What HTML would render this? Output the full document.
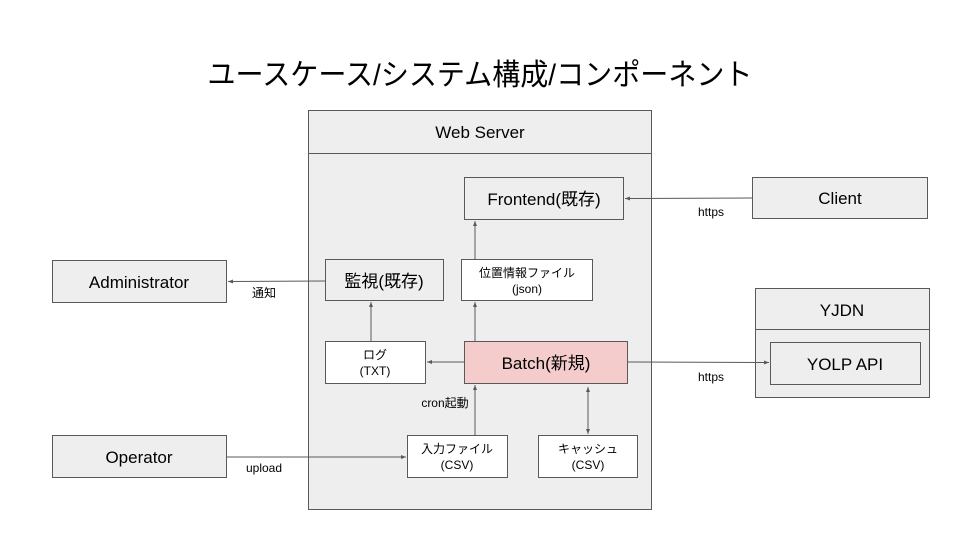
<!DOCTYPE html>
<html><head><meta charset="utf-8"><style>
html,body{margin:0;padding:0;background:#fff;}
svg{display:block;font-family:"Liberation Sans","Noto Sans CJK JP",sans-serif;}
</style></head><body>
<svg width="960" height="540" viewBox="0 0 960 540" xmlns="http://www.w3.org/2000/svg">
<defs><marker id="a" viewBox="0 0 10 10" refX="10" refY="5" markerWidth="5" markerHeight="5" orient="auto-start-reverse"><path d="M0 1 L10 5 L0 9 z" fill="#595959"/></marker></defs>
<text x="480" y="85" font-size="30" text-anchor="middle" textLength="545" lengthAdjust="spacingAndGlyphs" fill="#000">ユースケース/システム構成/コンポーネント</text>
<g stroke="#595959" stroke-width="1" fill="#eeeeee">
<rect x="308.5" y="110.5" width="343" height="399"/>
<line x1="308" y1="153.5" x2="651" y2="153.5"/>
<rect x="464.5" y="177.5" width="159" height="42"/>
<rect x="325.5" y="259.5" width="118" height="41"/>
<rect x="461.5" y="259.5" width="131" height="41" fill="#fff"/>
<rect x="325.5" y="341.5" width="100" height="42" fill="#fff"/>
<rect x="464.5" y="341.5" width="163" height="42" fill="#f4cccc"/>
<rect x="407.5" y="435.5" width="100" height="42" fill="#fff"/>
<rect x="538.5" y="435.5" width="99" height="42" fill="#fff"/>
<rect x="52.5" y="260.5" width="174" height="42"/>
<rect x="52.5" y="435.5" width="174" height="42"/>
<rect x="752.5" y="177.5" width="175" height="41"/>
<rect x="755.5" y="288.5" width="174" height="109"/>
<line x1="755" y1="329.5" x2="929" y2="329.5"/>
<rect x="770.5" y="342.5" width="150" height="42"/>
</g>
<g stroke="#595959" stroke-width="1" fill="none" marker-end="url(#a)">
<line x1="752" y1="198" x2="625" y2="198.5"/>
<line x1="475" y1="259" x2="475" y2="221"/>
<line x1="325" y1="281" x2="228" y2="281.5"/>
<line x1="371" y1="341" x2="371" y2="302"/>
<line x1="475" y1="341" x2="475" y2="302"/>
<line x1="464" y1="362" x2="427" y2="362"/>
<line x1="627" y1="362" x2="769" y2="362.5"/>
<line x1="475" y1="435" x2="475" y2="385"/>
<line x1="226" y1="457" x2="406" y2="457"/>
<line x1="588" y1="387" x2="588" y2="434" marker-start="url(#a)"/>
</g>
<g font-size="17" text-anchor="middle" fill="#000">
<text x="480" y="138">Web Server</text>
<text x="544" y="205">Frontend(既存)</text>
<text x="384" y="287">監視(既存)</text>
<text x="546" y="369">Batch(新規)</text>
<text x="139" y="288">Administrator</text>
<text x="139" y="463">Operator</text>
<text x="840" y="204">Client</text>
<text x="842" y="316">YJDN</text>
<text x="845" y="370">YOLP API</text>
</g>
<g font-size="12" text-anchor="middle" fill="#000">
<text x="527" y="277">位置情報ファイル</text>
<text x="527" y="293">(json)</text>
<text x="375" y="359">ログ</text>
<text x="375" y="375">(TXT)</text>
<text x="457" y="453">入力ファイル</text>
<text x="457" y="469">(CSV)</text>
<text x="588" y="453">キャッシュ</text>
<text x="588" y="469">(CSV)</text>
<text x="711" y="216">https</text>
<text x="711" y="381">https</text>
<text x="264" y="297">通知</text>
<text x="264" y="472">upload</text>
<text x="445" y="407">cron起動</text>
</g>
</svg>
</body></html>
